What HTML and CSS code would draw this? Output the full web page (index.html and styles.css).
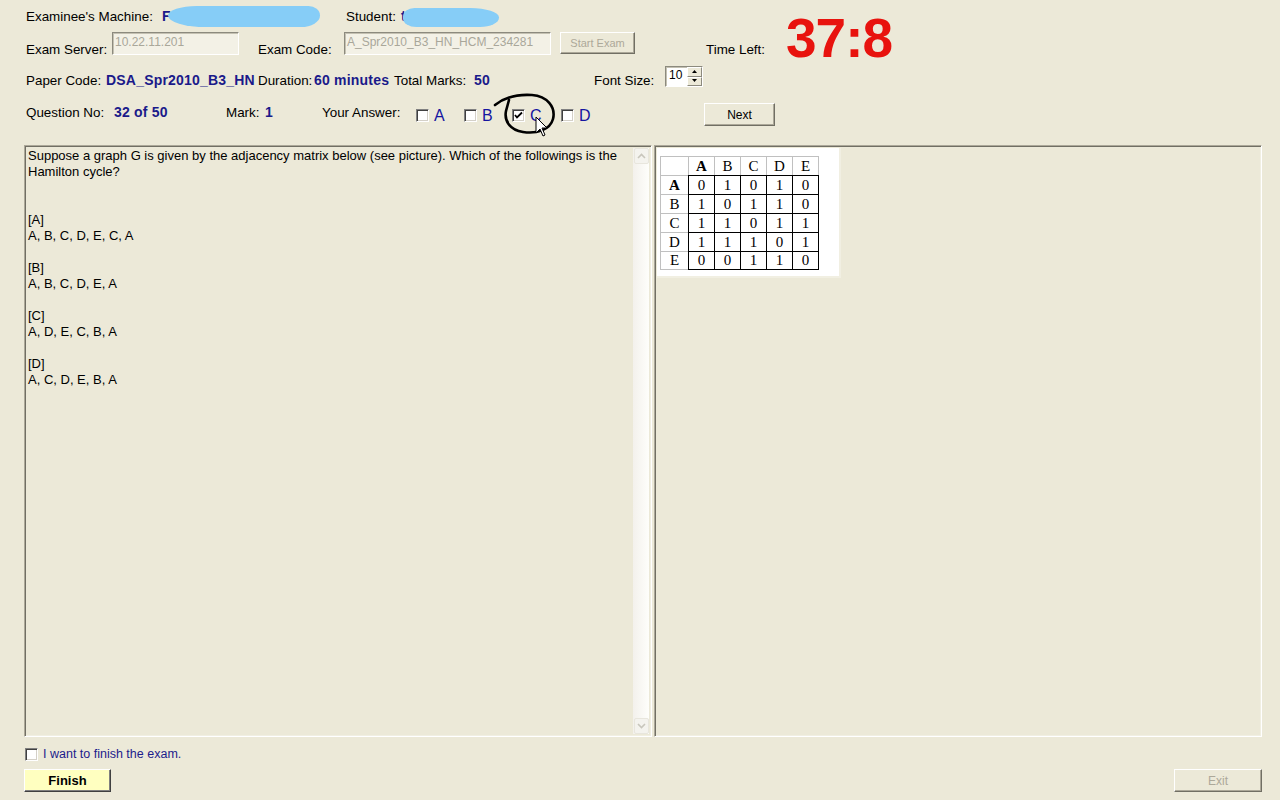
FILE: index.html
```html
<!DOCTYPE html>
<html>
<head>
<meta charset="utf-8">
<title>Exam Client</title>
<link rel="stylesheet" href="styles.css">
</head>
<body>
<div class="app">
  <div class="row row1">
    <span class="lbl w-machine">Examinee's Machine:</span>
    <span class="val redact w-machval">F<span class="blob blob1"></span></span>
    <span class="lbl w-student">Student:</span>
    <span class="val redact">t<span class="blob blob2"></span></span>
  </div>

  <div class="row row2">
    <span class="lbl low w-server">Exam Server:</span>
    <div class="textbox tb-server">10.22.11.201</div>
    <span class="lbl low w-code">Exam Code:</span>
    <div class="textbox tb-code">A_Spr2010_B3_HN_HCM_234281</div>
    <div class="btn btn-start">Start Exam</div>
    <span class="lbl low w-time">Time Left:</span>
    <div class="timer"><span>37:8</span></div>
  </div>

  <div class="row row3">
    <span class="lbl w-paper">Paper Code:</span>
    <span class="val w-paperval">DSA_Spr2010_B3_HN</span>
    <span class="lbl w-dur">Duration:</span>
    <span class="val w-durval">60 minutes</span>
    <span class="lbl w-total">Total Marks:</span>
    <span class="val w-totalval">50</span>
    <span class="lbl w-font">Font Size:</span>
    <div class="spinner">
      <span class="spin-val">10</span>
      <span class="spin-btns">
        <span class="spin-b"><svg width="7" height="4" viewBox="0 0 7 4"><path d="M3.5 0 L6 3 L1 3 Z" fill="#000"/></svg></span>
        <span class="spin-b"><svg width="7" height="4" viewBox="0 0 7 4"><path d="M1 0 L6 0 L3.5 3 Z" fill="#000"/></svg></span>
      </span>
    </div>
  </div>

  <div class="row row4">
    <span class="lbl top w-qno">Question No:</span>
    <span class="val top w-qnoval">32 of 50</span>
    <span class="lbl top w-mark">Mark:</span>
    <span class="val top w-markval">1</span>
    <span class="lbl top w-answer">Your Answer:</span>
    <div class="answers">
      <label class="opt"><span class="cb"></span><span class="opt-l">A</span></label>
      <label class="opt"><span class="cb"></span><span class="opt-l">B</span></label>
      <label class="opt"><span class="cb checked"><svg width="9" height="9" viewBox="0 0 9 9"><path d="M1 4 L3 6.5 L8 1.5" stroke="#000" stroke-width="1.8" fill="none"/></svg></span><span class="opt-l">C</span></label>
      <label class="opt"><span class="cb"></span><span class="opt-l">D</span></label>
    </div>
    <div class="btn btn-next">Next</div>
    <svg class="scribble" width="80" height="60" viewBox="480 85 80 60">
      <path d="M495 105 C504 98 517 94 532 95 C547 96 556 107 553 119 C550 130 537 134 523 132 C510 130 504 121 506 111 L509 100" stroke="#000" stroke-width="2.6" fill="none" stroke-linecap="round"/>
      <path d="M536 117 L536 133 L540 129 L543 136 L545 135 L542 128 L547 128 Z" fill="#fff" stroke="#000" stroke-width="1"/>
    </svg>
  </div>

  <div class="main">
    <div class="panel left">
      <div class="qtext">
        <p>Suppose a graph G is given by the adjacency matrix below (see picture). Which of the followings is the Hamilton cycle?</p>
        <p class="gap2">[A]<br>A, B, C, D, E, C, A</p>
        <p class="gap1">[B]<br>A, B, C, D, E, A</p>
        <p class="gap1">[C]<br>A, D, E, C, B, A</p>
        <p class="gap1">[D]<br>A, C, D, E, B, A</p>
      </div>
      <div class="vscroll">
        <span class="sb-btn"><svg width="9" height="6" viewBox="0 0 9 6"><path d="M1 5 L4.5 1.5 L8 5" stroke="#c8c6bc" stroke-width="1.6" fill="none"/></svg></span>
        <span class="sb-track"></span>
        <span class="sb-btn"><svg width="9" height="6" viewBox="0 0 9 6"><path d="M1 1 L4.5 4.5 L8 1" stroke="#c8c6bc" stroke-width="1.6" fill="none"/></svg></span>
      </div>
    </div>
    <div class="panel right">
      <div class="picture">
        <table class="matrix">
          <tr><th class="corner"></th><th class="bold">A</th><th>B</th><th>C</th><th>D</th><th class="lastc">E</th></tr>
          <tr><th class="rh bold">A</th><td>0</td><td>1</td><td>0</td><td>1</td><td class="lastc">0</td></tr>
          <tr><th class="rh">B</th><td>1</td><td>0</td><td>1</td><td>1</td><td class="lastc">0</td></tr>
          <tr><th class="rh">C</th><td>1</td><td>1</td><td>0</td><td>1</td><td class="lastc">1</td></tr>
          <tr><th class="rh">D</th><td>1</td><td>1</td><td>1</td><td>0</td><td class="lastc">1</td></tr>
          <tr class="lastr"><th class="rh">E</th><td>0</td><td>0</td><td>1</td><td>1</td><td class="lastc">0</td></tr>
        </table>
      </div>
    </div>
  </div>

  <label class="finish-check"><span class="cb"></span><span class="finish-l">I want to finish the exam.</span></label>

  <div class="bottom">
    <div class="btn btn-finish">Finish</div>
    <div class="btn btn-exit">Exit</div>
  </div>
</div>
</body>
</html>
```

FILE: styles.css
```css
html, body {
  margin: 0;
  padding: 0;
}
body {
  background: #ECE9D8;
  font-family: "Liberation Sans", Arial, sans-serif;
  font-size: 13px;
  color: #000;
  width: 1280px;
  height: 800px;
  overflow: hidden;
}
.app {
  display: flex;
  flex-direction: column;
}
.row {
  display: flex;
  padding-left: 26px;
  white-space: nowrap;
}
.lbl, .val {
  line-height: 15px;
  flex: none;
}
.lbl {
  font-size: 13.4px;
}
.val {
  color: #1a1a8a;
  font-weight: bold;
  font-size: 14px;
  letter-spacing: 0.2px;
}

/* row 1 */
.row1 {
  margin-top: 8px;
  height: 17px;
  align-items: center;
}
.w-machine { width: 136px; }
.w-machval { width: 184px; }
.w-student { width: 55px; }
.redact {
  position: relative;
}
.blob {
  position: absolute;
  background: #86CDF7;
}
.blob1 {
  left: 6px;
  top: -3px;
  width: 152px;
  height: 21px;
  border-radius: 30px 12px 20px 40px / 10px 10px 12px 12px;
}
.blob2 {
  left: 2px;
  top: -1px;
  width: 96px;
  height: 19px;
  border-radius: 12px 30px 20px 14px / 9px 10px 10px 9px;
}

/* row 2 */
.row2 {
  margin-top: 7px;
  height: 24px;
  align-items: flex-start;
}
.lbl.low {
  align-self: flex-end;
  margin-bottom: -1px;
}
.w-server { width: 86px; }
.w-code { width: 86px; margin-left: 19px; }
.w-time { width: 80px; margin-left: 71px; }
.textbox {
  flex: none;
  box-sizing: border-box;
  height: 23px;
  background: #F3F1E6;
  border-top: 1px solid #8C8A7E;
  border-left: 1px solid #8C8A7E;
  border-right: 1px solid #fff;
  border-bottom: 1px solid #fff;
  box-shadow: inset 1px 1px 0 #C4C1B2;
  color: #A9A79A;
  font-size: 12px;
  line-height: 16px;
  padding: 1px 2px;
  overflow: hidden;
}
.tb-server { width: 127px; }
.tb-code { width: 207px; }
.btn {
  flex: none;
  box-sizing: border-box;
  display: flex;
  align-items: center;
  justify-content: center;
  background: #ECE9D8;
  border-top: 1px solid #fff;
  border-left: 1px solid #fff;
  border-right: 1px solid #716F64;
  border-bottom: 1px solid #716F64;
  box-shadow: inset -1px -1px 0 #ACA899;
  font-size: 12px;
}
.btn-start {
  width: 75px;
  height: 22px;
  margin-left: 9px;
  color: #ACA899;
  font-size: 11px;
}
.timer {
  flex: none;
  height: 24px;
  display: flex;
  align-items: center;
}
.timer span {
  color: #E8130E;
  font-weight: bold;
  font-size: 55px;
  line-height: 55px;
  margin-top: -12px;
  letter-spacing: -1px;
}

/* row 3 */
.row3 {
  margin-top: 10px;
  height: 22px;
  align-items: flex-end;
}
.w-paper { width: 80px; }
.w-paperval { width: 152px; }
.w-dur { width: 56px; }
.w-durval { width: 80px; }
.w-total { width: 80px; }
.w-totalval { width: 120px; }
.w-font { width: 71px; }
.spinner {
  flex: none;
  align-self: flex-start;
  box-sizing: border-box;
  width: 38px;
  height: 21px;
  display: flex;
  background: #fff;
  border-top: 1px solid #8C8A7E;
  border-left: 1px solid #8C8A7E;
  border-right: 1px solid #fff;
  border-bottom: 1px solid #fff;
  box-shadow: inset 1px 1px 0 #C4C1B2;
}
.spin-val {
  flex: 1;
  font-size: 12px;
  line-height: 17px;
  padding-left: 3px;
}
.spin-btns {
  width: 15px;
  display: flex;
  flex-direction: column;
}
.spin-b {
  flex: 1;
  box-sizing: border-box;
  display: flex;
  align-items: center;
  justify-content: center;
  background: #ECE9D8;
  border-top: 1px solid #fff;
  border-left: 1px solid #fff;
  border-right: 1px solid #8C8A7E;
  border-bottom: 1px solid #8C8A7E;
}

/* row 4 */
.row4 {
  margin-top: 15px;
  height: 24px;
  align-items: flex-start;
  position: relative;
}
.lbl.top, .val.top {
  padding-top: 2px;
}
.w-qno { width: 88px; }
.w-qnoval { width: 112px; }
.w-mark { width: 39px; }
.w-markval { width: 57px; }
.w-answer { width: 94px; }
.answers {
  flex: none;
  width: 288px;
  display: flex;
}
.opt {
  width: 48px;
  display: flex;
  align-items: flex-start;
  height: 24px;
}
.opt:nth-child(4) { margin-left: 1px; }
.cb {
  flex: none;
  box-sizing: border-box;
  width: 13px;
  height: 13px;
  background: #fff;
  border-top: 1px solid #808080;
  border-left: 1px solid #808080;
  border-right: 1px solid #fff;
  border-bottom: 1px solid #fff;
  box-shadow: inset 1px 1px 0 #404040, inset -1px -1px 0 #D4D0C8;
  display: flex;
  align-items: center;
  justify-content: center;
  margin-top: 6px;
}
.opt-l {
  margin-left: 5px;
  color: #1515A0;
  font-size: 16px;
  line-height: 18px;
  margin-top: 4px;
}
.btn-next {
  width: 71px;
  height: 23px;
}
.scribble {
  position: absolute;
  left: 480px;
  top: -18px;
  overflow: visible;
}

/* main */
.main {
  margin-top: 18px;
  height: 592px;
  display: flex;
  gap: 2px;
  padding-left: 24px;
}
.panel {
  box-sizing: border-box;
  height: 592px;
  border-top: 1px solid #ACA899;
  border-left: 1px solid #ACA899;
  border-right: 1px solid #fff;
  border-bottom: 1px solid #fff;
  box-shadow: inset 1px 1px 0 #716F64, inset -1px -1px 0 #F1EFE2;
  background: #ECE9D8;
}
.left {
  width: 628px;
  display: flex;
  padding: 2px 2px 2px 2px;
}
.qtext {
  flex: 1;
  font-size: 13px;
  line-height: 16px;
  padding-left: 1px;
  padding-right: 4px;
}
.qtext p {
  margin: 0;
}
.qtext .gap2 { margin-top: 32px; }
.qtext .gap1 { margin-top: 16px; }
.vscroll {
  flex: none;
  width: 16px;
  display: flex;
  flex-direction: column;
  background: linear-gradient(to right, #F3F1EC, #FEFEFB);
}
.sb-btn {
  flex: none;
  box-sizing: border-box;
  height: 16px;
  margin: 0 0 0 1px;
  display: flex;
  align-items: center;
  justify-content: center;
  background: #F4F3EE;
  border: 1px solid #E8E6DD;
  border-radius: 2px;
}
.sb-track {
  flex: 1;
}
.right {
  width: 608px;
  padding: 2px;
}
.picture {
  box-sizing: border-box;
  width: 184px;
  height: 130px;
  background: #fff;
  border-right: 2px solid #F1EFE2;
  border-bottom: 2px solid #F1EFE2;
  padding: 8px 0 0 3px;
}
.matrix {
  border-collapse: separate;
  border-spacing: 0;
  font-family: "Liberation Serif", "Times New Roman", serif;
  font-size: 15px;
}
.matrix th, .matrix td {
  box-sizing: border-box;
  height: 19px;
  width: 26px;
  padding: 0;
  text-align: center;
  font-weight: normal;
  line-height: 17px;
  border: 0;
}
.matrix th.bold { font-weight: bold; }
.matrix th {
  border-top: 1px solid #C0C0C0;
  border-left: 1px solid #C0C0C0;
}
.matrix th.corner { width: 28px; }
.matrix th.lastc { border-right: 1px solid #C0C0C0; width: 27px; }
.matrix tr.lastr th { border-bottom: 1px solid #C0C0C0; }
.matrix td {
  border-top: 1px solid #000;
  border-left: 1px solid #000;
}
.matrix td.lastc { border-right: 1px solid #000; width: 27px; }
.matrix tr.lastr td { border-bottom: 1px solid #000; }

/* bottom */
.finish-check {
  margin-top: 11px;
  margin-left: 25px;
  display: flex;
  align-items: center;
  height: 13px;
}
.finish-check .cb {
  margin-top: 0;
}
.finish-l {
  margin-left: 5px;
  color: #1c1c8c;
  font-size: 12.5px;
  line-height: 15px;
}
.bottom {
  margin-top: 8px;
  display: flex;
  justify-content: space-between;
  padding: 0 18px 0 24px;
}
.btn-finish {
  width: 87px;
  height: 23px;
  background: #FFFFC0;
  font-weight: bold;
  font-size: 13px;
  border-right: 1px solid #404040;
  border-bottom: 1px solid #404040;
  box-shadow: inset -1px -1px 0 #808080;
}
.btn-exit {
  width: 88px;
  height: 23px;
  color: #ACA899;
  font-size: 12px;
}
```
